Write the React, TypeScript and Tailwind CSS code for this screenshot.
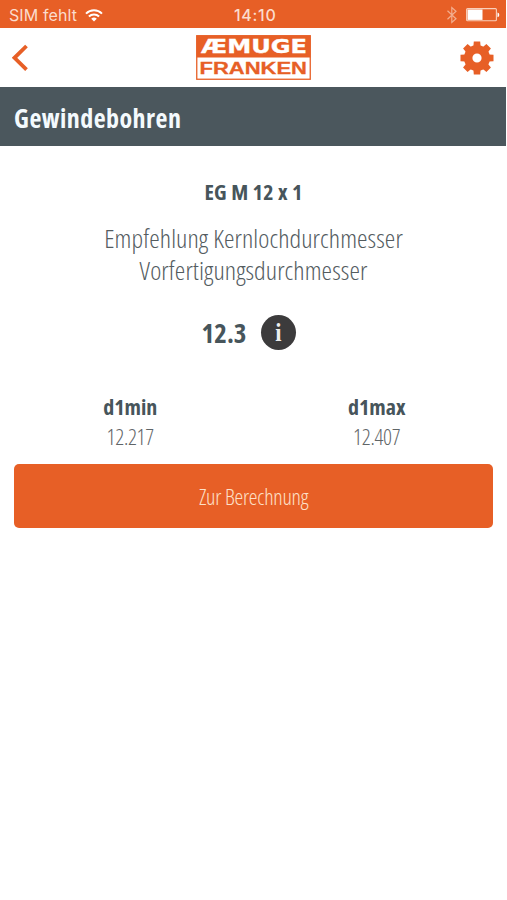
const Logo = () => (
	<svg width="115" height="45" viewBox="0 0 115 45" role="img" aria-label="EMUGE FRANKEN">
		<rect x="0.75" y="0.75" width="113.5" height="43.5" fill="#fff" stroke="#e75f26" strokeWidth="1.3" />
		<rect x="0.5" y="0.5" width="114" height="22" fill="#e75f26" />
		<text x="5" y="18.2" fill="#fff" stroke="#fff" strokeWidth="0.3" fontWeight="700" fontFamily="DejaVu Sans" fontSize="19" textLength="106" lengthAdjust="spacingAndGlyphs">
			ÆMUGE
		</text>
		<text x="3.5" y="39.2" fill="#e75f26" stroke="#e75f26" strokeWidth="0.3" fontWeight="700" fontFamily="Liberation Sans" fontSize="17.2" textLength="107.5" lengthAdjust="spacingAndGlyphs">
			FRANKEN
		</text>
	</svg>
);

const Gear = () => (
	<svg width="34" height="34" viewBox="-17 -17 34 34" fill="#e75f26">
		<circle r="8.8" fill="none" stroke="#e75f26" strokeWidth="8.4" />
		{[0, 45, 90, 135].map((angle) => (
			<g key={angle} transform={`rotate(${angle})`}>
				<path d="M-3.6-11.5-3.2-16.5H3.2L3.6-11.5ZM-3.6 11.5-3.2 16.5H3.2L3.6 11.5Z" />
			</g>
		))}
	</svg>
);

const StatusBar = () => (
	<div className="relative flex h-7 w-[506px] items-center bg-[#e75f26] pl-[9px] pr-[6px] pt-[2px] font-['Inter',sans-serif] text-[#fbdccd]">
		<span className="text-[16px] leading-none tracking-[0.1px]">SIM fehlt</span>
		<svg className="ml-[8px]" width="18" height="13" viewBox="0 0 18 13" fill="none" stroke="#fff" strokeWidth="2">
			<path d="M1 4.6a11.4 11.4 0 0 1 16 0M3.9 7.5a7.3 7.3 0 0 1 10.2 0" />
			<path d="M9 12.6 6.2 9.8a4 4 0 0 1 5.6 0Z" fill="#fff" stroke="none" />
		</svg>
		<span className="absolute left-[234px] top-[7px] text-[16px] font-medium leading-none tracking-[0.7px]">14:10</span>
		<svg className="ml-auto" width="12" height="18" viewBox="0 0 12 18" fill="none" stroke="#f3ae8f" strokeWidth="1.2">
			<path d="m1.5 4.8 8.5 8-4.2 3.7v-15L10 5.2 1.5 13.2" />
		</svg>
		<svg className="ml-[8px]" width="34" height="14" viewBox="0 0 34 14">
			<rect x="0.6" y="0.6" width="29.8" height="12.2" rx="1" fill="none" stroke="#f9cfbb" strokeWidth="1.1" />
			<rect x="1.5" y="1.5" width="15" height="10.4" fill="#fff" />
			<path d="M31.5 4.5a2.5 2.5 0 0 1 0 4.8Z" fill="#fff" />
		</svg>
	</div>
);

const Value = ({ label, value }: { label: string; value: string }) => (
	<div className="flex flex-1 flex-col items-center">
		<h3 className="text-[22px] font-bold leading-[30px] text-[#47555b]">{label}</h3>
		<p className="text-[22px] font-light leading-[30px] tracking-[-0.3px] text-[#5f6567]">{value}</p>
	</div>
);

const App = () => {
	return (
		<div className="h-[900px] w-full overflow-hidden bg-white">
			<div className="w-[507px] whitespace-nowrap font-['Open_Sans',sans-serif] font-stretch-[75%]">
				<StatusBar />
				<header className="flex h-[59px] items-center justify-between pl-[12px] pr-[13px]">
					<svg width="34" height="28" viewBox="0 0 34 28" fill="none" stroke="#e75f26" strokeWidth="3.8">
						<path d="M14.5 2 2.5 13.8 14.5 25.6" />
					</svg>
					<Logo />
					<Gear />
				</header>
				<div className="h-[59px] w-[506px] bg-[#4b575d] pl-[14px]">
					<h1 className="text-[26px] font-bold leading-[62px] tracking-[0.45px] text-[#f4fafd]">Gewindebohren</h1>
				</div>

				<main className="px-[14px] pt-[30px] text-center">
					<h2 className="text-[22px] font-bold leading-[30px] tracking-[0.25px] text-[#47555b]">EG M 12 x 1</h2>
					<p className="mt-[16px] text-[26.5px] font-light leading-[32px] tracking-[0.08px] text-[#545c5f]">
						<span>Empfehlung Kernlochdurchmesser</span>
						<br />
						<span>Vorfertigungsdurchmesser</span>
					</p>
					<div className="mt-[28px] flex items-center justify-center gap-[15px] pr-[9px]">
						<strong className="pt-px text-[27px] font-bold leading-[36px] text-[#47555b]">12.3</strong>
						<span className="flex size-[35px] items-center justify-center rounded-full bg-[#3c3b3c] font-['Liberation_Serif',serif] text-[25px] font-bold leading-none text-[#eee]">
							<span className="scale-x-90">i</span>
						</span>
					</div>
					<div className="-mx-[7px] mt-[40px] flex">
						<Value label="d1min" value="12.217" />
						<Value label="d1max" value="12.407" />
					</div>
					<button className="mt-[13px] h-[64px] w-full rounded-[5px] bg-[#e75f26] text-[22px] font-light tracking-[-0.25px] text-[#fde0c8]">
						Zur Berechnung
					</button>
				</main>
			</div>
		</div>
	);
};

export default App;
